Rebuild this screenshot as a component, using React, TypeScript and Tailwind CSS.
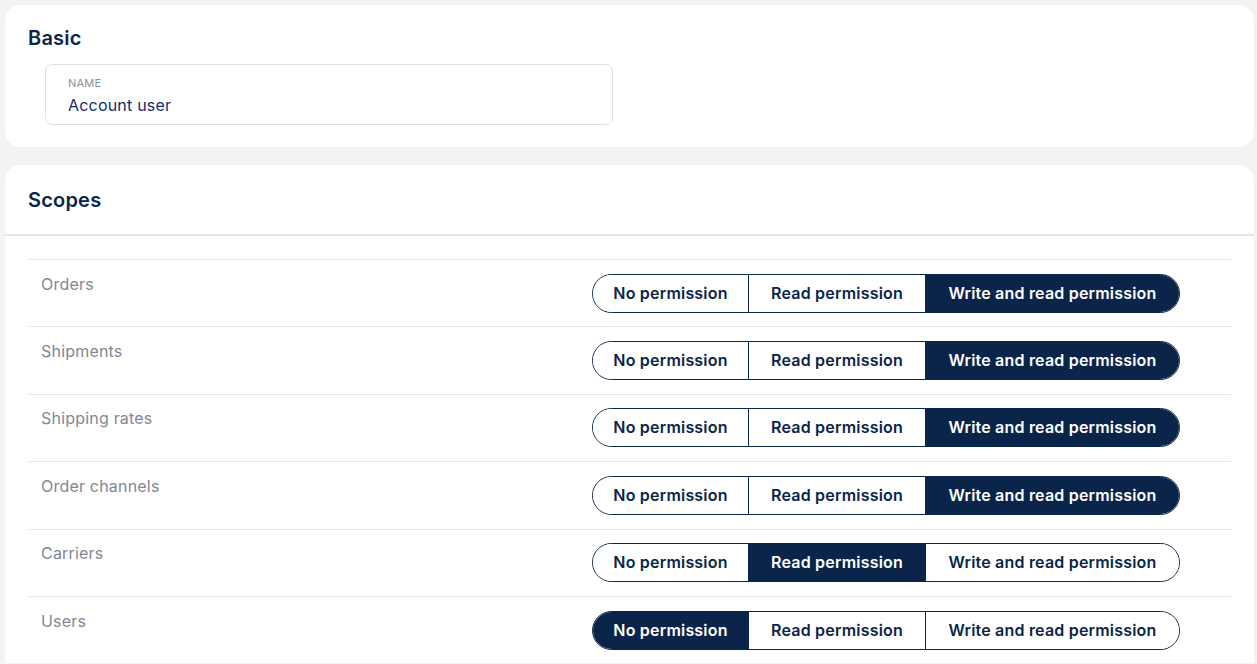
import { useState } from 'react';

type Level = 'none' | 'read' | 'write';

const scopes: { name: string; level: Level }[] = [
  { name: 'Orders', level: 'write' },
  { name: 'Shipments', level: 'write' },
  { name: 'Shipping rates', level: 'write' },
  { name: 'Order channels', level: 'write' },
  { name: 'Carriers', level: 'read' },
  { name: 'Users', level: 'none' },
];

const options: { value: Level; label: string; width: string }[] = [
  { value: 'none', label: 'No permission', width: 'w-[155px]' },
  { value: 'read', label: 'Read permission', width: 'w-[177px]' },
  { value: 'write', label: 'Write and read permission', width: 'w-[254px]' },
];

function PermissionToggle({ value, onChange }: { value: Level; onChange: (v: Level) => void }) {
  return (
    <div className="flex h-[39px] overflow-hidden rounded-full border border-[#0a2549]">
      {options.map((o, i) => (
        <button
          key={o.value}
          onClick={() => onChange(o.value)}
          className={`${o.width} ${i > 0 ? 'border-l border-[#0a2549]' : ''} ${
            value === o.value ? 'bg-[#0a2549] text-white' : 'bg-white text-[#0a2549]'
          } flex shrink-0 items-center justify-center pb-[1px] text-[16px] font-semibold tracking-[0.2px]`}
        >
          {o.label}
        </button>
      ))}
    </div>
  );
}

export default function App() {
  const [levels, setLevels] = useState<Level[]>(scopes.map((s) => s.level));

  return (
    <div className="min-h-[664px] bg-[#f3f3f3] pt-[5px] pl-[5px] font-['Inter',sans-serif] text-[#0a2549]">
      <div className="w-[1249px] rounded-[16px] bg-white px-[23px] pt-[20px] pb-[22px]">
        <h2 className="text-[20px] leading-[26px] font-semibold tracking-[0.2px]">Basic</h2>
        <div className="mt-[13px] ml-[17px] h-[61px] w-[568px] rounded-[7px] border border-[#e0e1e4] px-[22px] pt-[10px]">
          <div className="text-[11px] leading-[16px] tracking-[0.2px] text-[#8a91a0] uppercase">Name</div>
          <div className="mt-[4px] text-[16px] leading-[20px] tracking-[0.2px] text-[#132c6b]">Account user</div>
        </div>
      </div>

      <div className="mt-[18px] w-[1249px] rounded-t-[16px] bg-white">
        <div className="flex h-[69px] items-center px-[23px]">
          <h2 className="text-[20px] leading-[26px] font-semibold tracking-[0.2px]">Scopes</h2>
        </div>
        <div className="h-[2px] bg-[#e4e4e4]" />
        <div className="px-[23px] pt-[23px]">
          {scopes.map((s, i) => (
            <div
              key={s.name}
              className="flex items-start justify-between border-t border-[#e4e4ea] py-[13.7px] pr-[51px] pl-[13px]"
            >
              <span className="-mt-[1px] text-[16px] leading-[22px] tracking-[0.2px] text-[#7f8797]">{s.name}</span>
              <PermissionToggle
                value={levels[i]}
                onChange={(v) => setLevels((prev) => prev.map((l, j) => (j === i ? v : l)))}
              />
            </div>
          ))}
        </div>
      </div>
    </div>
  );
}
